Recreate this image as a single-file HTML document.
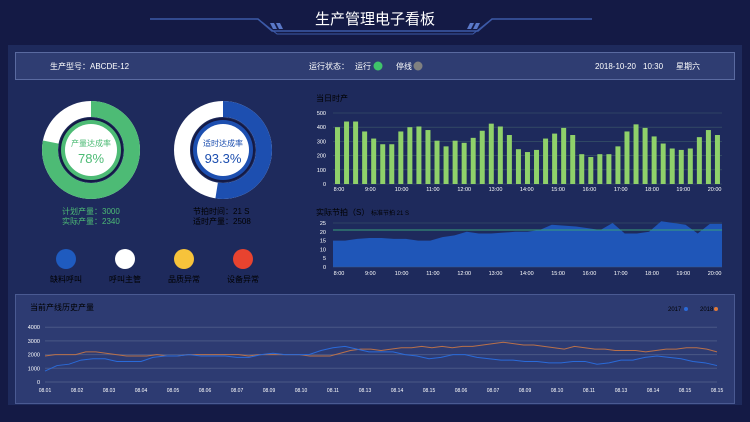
<!DOCTYPE html><html><head><meta charset="utf-8"><style>
*{margin:0;padding:0;box-sizing:border-box}
body{width:750px;height:422px;background:#141a45;overflow:hidden;position:relative;font-family:"Liberation Sans","Noto Sans CJK SC",sans-serif;color:#fff}
.a{position:absolute;white-space:nowrap}
</style></head><body>
<div class="a" style="left:8px;top:45px;width:734px;height:360px;background:#1e2a5c"></div>
<div class="a" style="left:15px;top:52px;width:720px;height:28px;background:#2f3d72;border:1px solid #5a6aa0"></div>
<div class="a" style="left:15px;top:294px;width:720px;height:110px;background:#2d3b72;border:1px solid #4a5a92"></div>
<svg class="a" style="left:0;top:0" width="750" height="422" id="s">
<g fill="none" stroke="#3d5aa8" stroke-width="1.5">
<polyline points="150,19 258,19 272,31 478,31 492,19 592,19"/>
<polyline points="262,22 277,34 473,34 488,22" stroke-width="1"/>
</g>
<g fill="#5a78c8"><polygon points="270,23 274,23 277,29 273,29"/><polygon points="276,23 280,23 283,29 279,29"/><polygon points="470,23 474,23 471,29 467,29"/><polygon points="476,23 480,23 477,29 473,29"/></g>
<text x="375" y="24" font-size="15" text-anchor="middle" fill="#fff">生产管理电子看板</text>
<g font-size="8" fill="#fff"><text x="50" y="69">生产型号：ABCDE-12</text><text x="309" y="69">运行状态：</text><text x="355" y="69">运行</text><text x="396" y="69">停线</text><text x="595" y="69">2018-10-20</text><text x="643" y="69">10:30</text><text x="676" y="69">星期六</text></g>
<circle cx="378" cy="66" r="4.5" fill="#3fc46a"/><circle cx="418" cy="66" r="4.5" fill="#808080"/>
<!-- gauges -->
<circle cx="91" cy="150" r="41" fill="none" stroke="#fff" stroke-width="16"/>
<circle cx="91" cy="150" r="41" fill="none" stroke="#4dbb75" stroke-width="16" stroke-dasharray="200.9 300" transform="rotate(-90 91 150)"/>
<circle cx="91" cy="150" r="32" fill="#141a45"/><circle cx="91" cy="150" r="30" fill="#4dbb75"/><circle cx="91" cy="150" r="26" fill="#fff"/>
<text x="91" y="146" font-size="8" fill="#4dbb75" text-anchor="middle">产量达成率</text>
<text x="91" y="163" font-size="13" fill="#4dbb75" text-anchor="middle">78%</text>
<circle cx="223" cy="150" r="41" fill="none" stroke="#fff" stroke-width="16"/>
<circle cx="223" cy="150" r="41" fill="none" stroke="#1d4fb0" stroke-width="16" stroke-dasharray="135 300" transform="rotate(-90 223 150)"/>
<circle cx="223" cy="150" r="32" fill="#141a45"/><circle cx="223" cy="150" r="30" fill="#1d4fb0"/><circle cx="223" cy="150" r="26" fill="#fff"/>
<text x="223" y="146" font-size="8" fill="#1d4fb0" text-anchor="middle">适时达成率</text>
<text x="223" y="163" font-size="13" fill="#1d4fb0" text-anchor="middle">93.3%</text>
<g font-size="8"><text x="62" y="214" fill="#4dbb75">计划产量：3000</text><text x="62" y="224" fill="#4dbb75">实际产量：2340</text><text x="193" y="214">节拍时间：21 S</text><text x="193" y="224">适时产量：2508</text></g>
<circle cx="66" cy="259" r="10" fill="#1f5bbf"/><circle cx="125" cy="259" r="10" fill="#fff"/><circle cx="184" cy="259" r="10" fill="#f7c33b"/><circle cx="243" cy="259" r="10" fill="#e8432f"/>
<g font-size="8" text-anchor="middle"><text x="66" y="282">缺料呼叫</text><text x="125" y="282">呼叫主管</text><text x="184" y="282">品质异常</text><text x="243" y="282">设备异常</text></g>
<g font-size="8"><text x="316" y="101">当日时产</text><text x="316" y="215">实际节拍（S）</text><text x="371" y="215" font-size="6">标准节拍  21  S</text><text x="30" y="310">当前产线历史产量</text><text x="668" y="311" font-size="6">2017</text><text x="700" y="311" font-size="6">2018</text></g>
<circle cx="686" cy="309" r="2" fill="#2a6ad8"/><circle cx="716" cy="309" r="2" fill="#e07a3a"/>
<g id="dyn"></g>
</svg>
<script>
var g=document.getElementById('dyn'),h='';
function L(x1,y1,x2,y2,c,w){h+='<line x1="'+x1+'" y1="'+y1+'" x2="'+x2+'" y2="'+y2+'" stroke="'+c+'" stroke-width="'+(w||0.6)+'"/>'}
function T(x,y,t,a,s){h+='<text x="'+x+'" y="'+y+'" font-size="'+(s||5.5)+'" fill="#fff" text-anchor="'+(a||'middle')+'">'+t+'</text>'}
// bar chart
for(var i=0;i<=5;i++){var y=184-i*14.2;L(333,y,722,y,'#3d5a6a');T(326,y+2,i*100,'end')}
var b=[400,440,440,370,320,280,280,370,400,405,380,305,265,305,290,325,375,425,405,345,245,225,240,320,355,395,345,210,190,210,210,265,370,420,395,335,285,250,240,250,330,380,345];
var st=(722-333)/b.length;
b.forEach(function(v,i){var hh=v*0.142;h+='<rect x="'+(333+st*i+2)+'" y="'+(184-hh)+'" width="5" height="'+hh+'" fill="#8fd16a"/>'});
var tl=['8:00','9:00','10:00','11:00','12:00','13:00','14:00','15:00','16:00','17:00','18:00','19:00','20:00'];
tl.forEach(function(t,i){T(339+i*31.3,191,t);T(339+i*31.3,275,t)});
// area
for(var i=0;i<=5;i++){var y=267-i*8.8;T(326,y+2,i*5,'end')}
var a=[15,15,16,16.5,16.5,16,16,15,15,17,18,20,19,19,19.5,20,20,21,24,23.5,23,22,21,25,19,19,20,26,25,24,19,24.5,24.5];
var p='333,267 ';a.forEach(function(v,i){p+=(333+i*389/(a.length-1))+','+(267-v*1.76)+' '});p+='722,267';
L(333,223,722,223,'#3d5a6a');
h+='<polygon points="'+p+'" fill="#1f56b8"/>';
L(333,230,722,230,'#3aa07a',1);L(333,267,722,267,'#3d5a8a');
// bottom
for(var i=0;i<=4;i++){var y=382-i*13.7;L(45,y,717,y,'#4a5886',1);T(40,y+2,i*1000,'end')}
var bl=[0.8,1.2,1.3,1.6,1.7,1.7,1.5,1.5,1.5,1.8,1.9,1.9,2.0,1.9,1.9,1.9,1.8,1.8,2.0,2.1,2.0,2.0,2.0,2.3,2.5,2.6,2.4,2.2,2.2,2.2,2.0,1.9,1.7,1.8,2.0,2.0,1.8,1.7,1.6,1.6,1.5,1.5,1.4,1.4,1.5,1.5,1.3,1.4,1.6,1.6,1.8,1.9,1.8,1.7,1.5,1.4,1.2];
var or=[1.9,2.0,2.0,2.0,2.2,2.2,2.1,2.0,1.9,1.9,1.9,2.0,1.9,1.9,2.0,2.0,2.0,2.0,2.0,2.0,1.9,2.0,2.0,2.0,2.0,2.0,1.9,1.9,1.9,2.1,2.3,2.4,2.4,2.3,2.4,2.5,2.5,2.6,2.5,2.6,2.5,2.6,2.6,2.7,2.8,2.9,2.8,2.7,2.7,2.6,2.5,2.4,2.6,2.5,2.4,2.4,2.3,2.3,2.3,2.2,2.3,2.4,2.4,2.5,2.5,2.4,2.2];
function pl(d,c){var s='';d.forEach(function(v,i){s+=(45+i*672/(d.length-1))+','+(382-v*13.7)+' '});h+='<polyline points="'+s+'" fill="none" stroke="'+c+'" stroke-width="1"/>'}
pl(or,'#b8704a');pl(bl,'#2a6ad8');
var dl=['08.01','08.02','08.03','08.04','08.05','08.06','08.07','08.09','08.10','08.11','08.13','08.14','08.15','08.06','08.07','08.09','08.10','08.11','08.13','08.14','08.15','08.15'];
dl.forEach(function(t,i){T(45+i*672/(dl.length-1),392,t,'middle',5)});
g.innerHTML=h;
</script>
</body></html>
